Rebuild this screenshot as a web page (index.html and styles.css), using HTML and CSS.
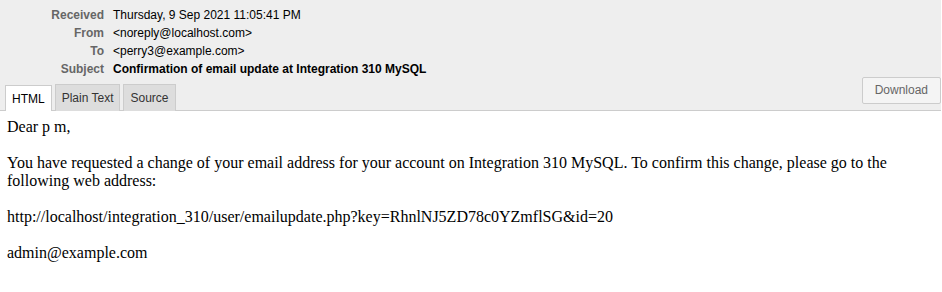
FILE: index.html
```html
<!DOCTYPE html>
<html>
<head>
    <title>Message</title>
    <link rel="stylesheet" href="styles.css">
</head>
<body>
    <div class="message-header">
        <div class="headers">
            <div class="label">Received</div>
            <div class="value">Thursday, 9 Sep 2021 11:05:41 PM</div>
            <div class="label">From</div>
            <div class="value">&lt;noreply@localhost.com&gt;</div>
            <div class="label">To</div>
            <div class="value">&lt;perry3@example.com&gt;</div>
            <div class="label">Subject</div>
            <div class="value subject">Confirmation of email update at Integration 310 MySQL</div>
        </div>

        <div class="bar">
            <div class="tabs">
                <div class="tab active">HTML</div>
                <div class="tab">Plain Text</div>
                <div class="tab">Source</div>
            </div>
            <button class="download">Download</button>
        </div>
    </div>

    <div class="message-body">
        Dear p m,<br>
        <br>
        You have requested a change of your email address for your account on Integration 310 MySQL. To confirm this change, please go to the following web address:<br>
        <br>
        http://localhost/integration_310/user/emailupdate.php?key=RhnlNJ5ZD78c0YZmflSG&amp;id=20<br>
        <br>
        admin@example.com
    </div>
</body>
</html>
```

FILE: styles.css
```css
body {
    margin: 0;
    background-color: #fff;
}

.message-header {
    background-color: #eee;
    border-bottom: 1px solid #ccc;
    padding-top: 6px;
    margin-right: 1px;
    font-family: "Liberation Sans", Arial, sans-serif;
    font-size: 12px;
}

.headers {
    display: grid;
    grid-template-columns: 104px auto;
    column-gap: 9px;
    line-height: 18px;
}

.headers .label {
    text-align: right;
    font-weight: bold;
    color: #666;
}

.headers .value {
    color: #000;
}

.headers .subject {
    font-weight: bold;
}

.bar {
    display: flex;
    justify-content: space-between;
    align-items: flex-end;
    margin-top: -1px;
}

.tabs {
    display: flex;
    gap: 3px;
    padding-left: 5px;
    margin-bottom: -1px;
}

.tab {
    padding: 6px 6px 4px;
    line-height: 14px;
    color: #333;
    background-color: #ddd;
    border: 1px solid #ccc;
    border-bottom: none;
    cursor: pointer;
}

.tab.active {
    background-color: #fff;
    color: #000;
    padding-top: 6px;
    margin-top: 1px;
    padding-bottom: 5px;
}

.download {
    font-family: "Liberation Sans", Arial, sans-serif;
    font-size: 12px;
    line-height: 15px;
    color: #666;
    background-color: #f4f4f4;
    border: 1px solid #ccc;
    border-radius: 2px;
    padding: 5px 12px;
    margin-bottom: 6px;
    cursor: pointer;
}

.message-body {
    padding: 7px 8px 8px 7px;
    font-family: "Liberation Serif", "Times New Roman", serif;
    font-size: 16px;
    line-height: 18px;
    color: #000;
}
```
